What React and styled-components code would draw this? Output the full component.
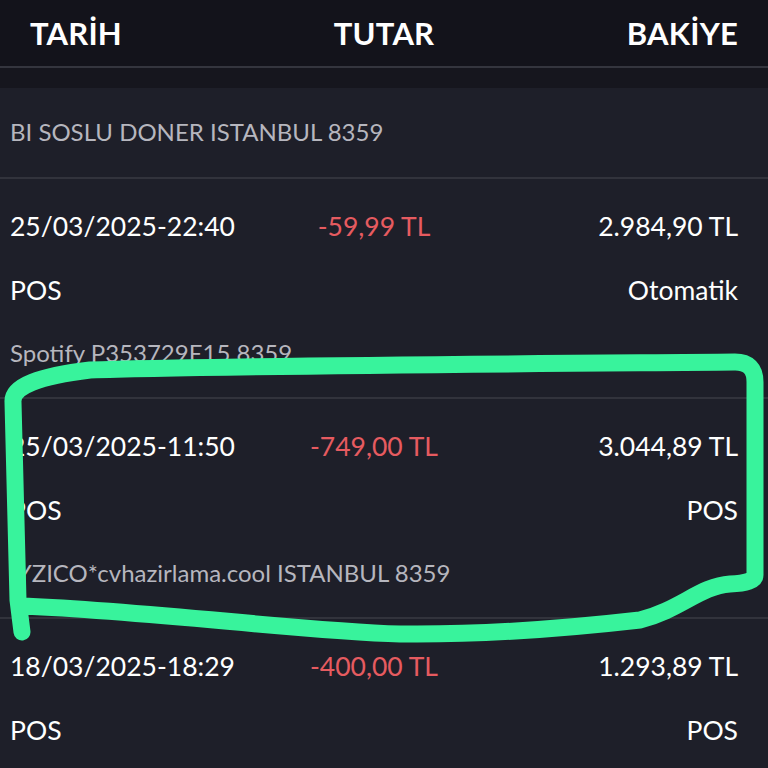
import React from 'react'
import styled, { createGlobalStyle } from 'styled-components'

const transactions = [
  { date: '25/03/2025-22:40', amount: '-59,99 TL', balance: '2.984,90 TL', type: 'POS', channel: 'Otomatik', desc: 'Spotify P353729E15 8359' },
  { date: '25/03/2025-11:50', amount: '-749,00 TL', balance: '3.044,89 TL', type: 'POS', channel: 'POS', desc: 'IYZICO*cvhazirlama.cool ISTANBUL 8359' },
  { date: '18/03/2025-18:29', amount: '-400,00 TL', balance: '1.293,89 TL', type: 'POS', channel: 'POS', desc: '' },
]

export default () => (
  <Page>
    <GlobalStyle />
    <Header>
      <HeadCell align='left'>TARİH</HeadCell>
      <HeadCell align='center'>TUTAR</HeadCell>
      <HeadCell align='right'>BAKİYE</HeadCell>
    </Header>
    <Band />
    <List>
      <Item first>
        <Desc>BI SOSLU DONER ISTANBUL 8359</Desc>
      </Item>
      {transactions.map((t, index) => (
        <Item key={index}>
          <Line>
            <Cell align='left'>{t.date}</Cell>
            <Amount>{t.amount}</Amount>
            <Cell align='right'>{t.balance}</Cell>
          </Line>
          <Line>
            <Cell align='left'>{t.type}</Cell>
            <span />
            <Cell align='right'>{t.channel}</Cell>
          </Line>
          {t.desc && <Desc>{t.desc}</Desc>}
        </Item>
      ))}
    </List>
    <Marker viewBox='0 0 768 768' width='768' height='768'>
      <path
        d='M22 632 L18 600 L13 402 C12 386 40 376 90 370 C200 366 500 364 735 362 Q755 362 755 382 L755 575 Q755 583 730 584 C700 586 680 610 640 620 C570 628 480 635 400 634 C300 631 160 612 24 606'
        fill='none'
        stroke='#38f39c'
        strokeWidth='17'
        strokeLinecap='round'
        strokeLinejoin='round'
      />
    </Marker>
  </Page>
)

const GlobalStyle = createGlobalStyle`
  body {
    margin: 0;
    background: #1e1f29;
    font-family: Lato, 'Open Sans', sans-serif;
  }
`

const Page = styled.div`
  position: relative;
  width: 768px;
  height: 768px;
  overflow: hidden;
  background: #1e1f29;
`

const Header = styled.div`
  display: grid;
  grid-template-columns: 1fr auto 1fr;
  align-items: center;
  height: 66px;
  padding: 0 30px;
  background: #13131b;
  border-bottom: 2px solid #34353e;
`

const HeadCell = styled.div`
  text-align: ${p => p.align};
  color: #ffffff;
  font-size: 31px;
  font-weight: 700;
  letter-spacing: 0.2px;
`

const Band = styled.div`
  height: 20px;
  background: #16161e;
`

const List = styled.div`
  display: flex;
  flex-direction: column;
`

const Item = styled.div`
  padding: ${p => (p.first ? '13px 0 14px' : '15px 0 13px')};
  border-top: ${p => (p.first ? 'none' : '2px solid #32333c')};
`

const Line = styled.div`
  display: grid;
  grid-template-columns: 1fr auto 1fr;
  align-items: center;
  height: 64px;
  padding: 0 30px 0 10px;
`

const Cell = styled.div`
  text-align: ${p => p.align};
  color: #ffffff;
  font-size: 26.5px;
  font-weight: 400;
  white-space: nowrap;
`

const Amount = styled(Cell)`
  text-align: center;
  color: #e65b60;
`

const Desc = styled.div`
  height: 62px;
  line-height: 62px;
  padding-left: 10px;
  color: #b6b6be;
  font-size: 24px;
  white-space: nowrap;
`

const Marker = styled.svg`
  position: absolute;
  top: 0;
  left: 0;
  pointer-events: none;
`
